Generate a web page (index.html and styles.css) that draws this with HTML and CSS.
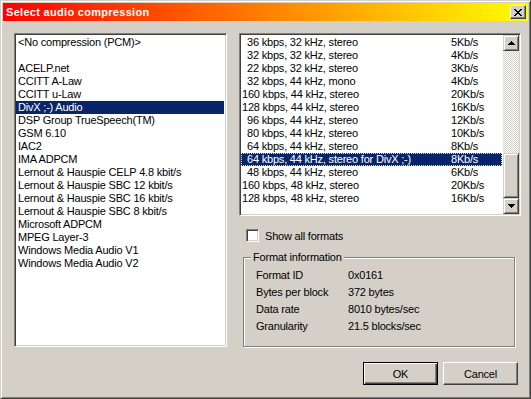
FILE: index.html
```html
<!DOCTYPE html>
<html lang="en">
<head>
    <meta charset="UTF-8">
    <title>Select audio compression</title>
    <link rel="stylesheet" href="styles.css">
</head>
<body>
    <div class="window">
        <div class="titlebar">
            <span class="title">Select audio compression</span>
            <button class="close">
                <svg width="8" height="7" viewBox="0 0 8 7" shape-rendering="crispEdges">
                    <path d="M0 0h2v1h-2zM6 0h2v1h-2zM1 1h2v1h-2zM5 1h2v1h-2zM2 2h4v1h-4zM3 3h2v1h-2zM2 4h4v1h-4zM1 5h2v1h-2zM5 5h2v1h-2zM0 6h2v1h-2zM6 6h2v1h-2z" fill="#000"/>
                </svg>
            </button>
        </div>

        <div class="main">
            <ul class="list codecs sunken">
                <li class="item">&lt;No compression (PCM)&gt;</li>
                <li class="item"></li>
                <li class="item">ACELP.net</li>
                <li class="item">CCITT A-Law</li>
                <li class="item">CCITT u-Law</li>
                <li class="item selected">DivX ;-) Audio</li>
                <li class="item">DSP Group TrueSpeech(TM)</li>
                <li class="item">GSM 6.10</li>
                <li class="item">IAC2</li>
                <li class="item">IMA ADPCM</li>
                <li class="item">Lernout &amp; Hauspie CELP 4.8 kbit/s</li>
                <li class="item">Lernout &amp; Hauspie SBC 12 kbit/s</li>
                <li class="item">Lernout &amp; Hauspie SBC 16 kbit/s</li>
                <li class="item">Lernout &amp; Hauspie SBC 8 kbit/s</li>
                <li class="item">Microsoft ADPCM</li>
                <li class="item">MPEG Layer-3</li>
                <li class="item">Windows Media Audio V1</li>
                <li class="item">Windows Media Audio V2</li>
            </ul>

            <div class="right">
                <div class="formats sunken">
                    <ul class="list rows">
                        <li class="row"><span class="pad">36 kbps, 32 kHz, stereo</span><span>5Kb/s</span></li>
                        <li class="row"><span class="pad">32 kbps, 32 kHz, stereo</span><span>4Kb/s</span></li>
                        <li class="row"><span class="pad">22 kbps, 32 kHz, stereo</span><span>3Kb/s</span></li>
                        <li class="row"><span class="pad">32 kbps, 44 kHz, mono</span><span>4Kb/s</span></li>
                        <li class="row"><span>160 kbps, 44 kHz, stereo</span><span>20Kb/s</span></li>
                        <li class="row"><span>128 kbps, 44 kHz, stereo</span><span>16Kb/s</span></li>
                        <li class="row"><span class="pad">96 kbps, 44 kHz, stereo</span><span>12Kb/s</span></li>
                        <li class="row"><span class="pad">80 kbps, 44 kHz, stereo</span><span>10Kb/s</span></li>
                        <li class="row"><span class="pad">64 kbps, 44 kHz, stereo</span><span>8Kb/s</span></li>
                        <li class="row selected focused"><span class="pad">64 kbps, 44 kHz, stereo for DivX ;-)</span><span>8Kb/s</span></li>
                        <li class="row"><span class="pad">48 kbps, 44 kHz, stereo</span><span>6Kb/s</span></li>
                        <li class="row"><span>160 kbps, 48 kHz, stereo</span><span>20Kb/s</span></li>
                        <li class="row"><span>128 kbps, 48 kHz, stereo</span><span>16Kb/s</span></li>
                    </ul>
                    <div class="scrollbar">
                        <div class="raised arrow">
                            <svg width="7" height="4" viewBox="0 0 7 4" shape-rendering="crispEdges">
                                <path d="M3 0h1v1h-1zM2 1h3v1h-3zM1 2h5v1h-5zM0 3h7v1h-7z" fill="#000"/>
                            </svg>
                        </div>
                        <div class="track"></div>
                        <div class="raised thumb"></div>
                        <div class="raised arrow">
                            <svg width="7" height="4" viewBox="0 0 7 4" shape-rendering="crispEdges">
                                <path d="M0 0h7v1h-7zM1 1h5v1h-5zM2 2h3v1h-3zM3 3h1v1h-1z" fill="#000"/>
                            </svg>
                        </div>
                    </div>
                </div>

                <label class="check-row">
                    <span class="checkbox"></span>
                    <span>Show all formats</span>
                </label>

                <div class="groupbox">
                    <span class="legend">Format information</span>
                    <div class="info">
                        <span>Format ID</span><span>0x0161</span>
                        <span>Bytes per block</span><span>372 bytes</span>
                        <span>Data rate</span><span>8010 bytes/sec</span>
                        <span>Granularity</span><span>21.5 blocks/sec</span>
                    </div>
                </div>
            </div>
        </div>

        <div class="buttons">
            <button class="btn default">OK</button>
            <button class="btn">Cancel</button>
        </div>
    </div>
</body>
</html>
```

FILE: styles.css
```css
body {
    margin: 0;
    font-family: "Liberation Sans", Arial, sans-serif;
    font-size: 11px;
    letter-spacing: -0.2px;
    color: #000;
}

.window {
    width: 531px;
    height: 399px;
    box-sizing: border-box;
    padding: 2px;
    background-color: #d4d0c8;
    border: 1px solid;
    border-color: #d4d0c8 #404040 #404040 #d4d0c8;
    box-shadow: inset 1px 1px #fff, inset -1px -1px #808080;
    display: flex;
    flex-direction: column;
}

.titlebar {
    height: 18px;
    display: flex;
    align-items: center;
    justify-content: space-between;
    padding: 0 2px 0 3px;
    background: linear-gradient(to right, #ff0000, #ffff00);
    color: #fff;
    font-weight: bold;
    letter-spacing: 0.3px;
}

.close {
    width: 16px;
    height: 14px;
    padding: 0;
    box-sizing: border-box;
    display: flex;
    align-items: center;
    justify-content: center;
    background-color: #d4d0c8;
    border: 1px solid;
    border-color: #fff #404040 #404040 #fff;
    box-shadow: inset -1px -1px #808080;
}

.main {
    display: flex;
    gap: 12px;
    padding: 12px 7px 0 11px;
}

.sunken {
    box-sizing: border-box;
    background-color: #fff;
    border: 1px solid;
    border-color: #808080 #fff #fff #808080;
    box-shadow: inset 1px 1px #404040, inset -1px -1px #d4d0c8;
}

.raised {
    box-sizing: border-box;
    background-color: #d4d0c8;
    border: 1px solid;
    border-color: #d4d0c8 #404040 #404040 #d4d0c8;
    box-shadow: inset 1px 1px #fff, inset -1px -1px #808080;
}

.list {
    list-style: none;
    margin: 0;
}

.codecs {
    width: 213px;
    height: 314px;
    padding: 2px 2px 0 1px;
}

.item {
    height: 13px;
    line-height: 13px;
    padding-left: 2px;
    white-space: nowrap;
}

.selected {
    background-color: #0a246a;
    color: #fff;
}

.right {
    width: 282px;
    display: flex;
    flex-direction: column;
}

.formats {
    height: 183px;
    padding: 1px;
    display: flex;
}

.rows {
    flex: 1;
    padding: 1px 1px 0 0;
}

.row {
    display: grid;
    grid-template-columns: 209px 1fr;
    height: 13px;
    line-height: 13px;
    padding-left: 1px;
    white-space: nowrap;
}

.pad {
    padding-left: 5px;
}

.focused {
    outline: 1px dotted #f3d68f;
    outline-offset: -1px;
}

.scrollbar {
    width: 16px;
    display: flex;
    flex-direction: column;
}

.arrow {
    height: 16px;
    display: flex;
    align-items: center;
    justify-content: center;
}

.track {
    flex: 1;
    background: repeating-conic-gradient(#fff 0 25%, #d4d0c8 0 50%) 0 0 / 2px 2px;
}

.thumb {
    height: 45px;
}

.check-row {
    display: flex;
    align-items: center;
    gap: 6px;
    margin-top: 13px;
    padding-left: 7px;
    height: 13px;
}

.checkbox {
    width: 13px;
    height: 13px;
    box-sizing: border-box;
    background-color: #fff;
    border: 1px solid;
    border-color: #808080 #fff #fff #808080;
    box-shadow: inset 1px 1px #404040, inset -1px -1px #d4d0c8;
}

.groupbox {
    position: relative;
    width: 272px;
    height: 90px;
    box-sizing: border-box;
    margin: 15px 0 0 4px;
    padding: 11px 0 0 12px;
    border: 1px solid #808080;
    box-shadow: inset 1px 1px #fff, 1px 1px #fff;
}

.legend {
    position: absolute;
    top: -7px;
    left: 7px;
    padding: 0 2px;
    line-height: 13px;
    background-color: #d4d0c8;
}

.info {
    display: grid;
    grid-template-columns: 92px auto;
    row-gap: 4px;
    line-height: 13px;
}

.buttons {
    display: flex;
    justify-content: flex-end;
    gap: 5px;
    margin-top: 15px;
    padding-right: 10px;
}

.btn {
    width: 75px;
    height: 23px;
    box-sizing: border-box;
    padding: 0;
    font-family: inherit;
    font-size: 11px;
    letter-spacing: inherit;
    color: #000;
    background-color: #d4d0c8;
    border: 1px solid;
    border-color: #fff #404040 #404040 #fff;
    box-shadow: inset -1px -1px #808080;
}

.default {
    border: 1px solid #000;
    box-shadow: inset 1px 1px #fff, inset -1px -1px #404040, inset -2px -2px #808080;
}
```
